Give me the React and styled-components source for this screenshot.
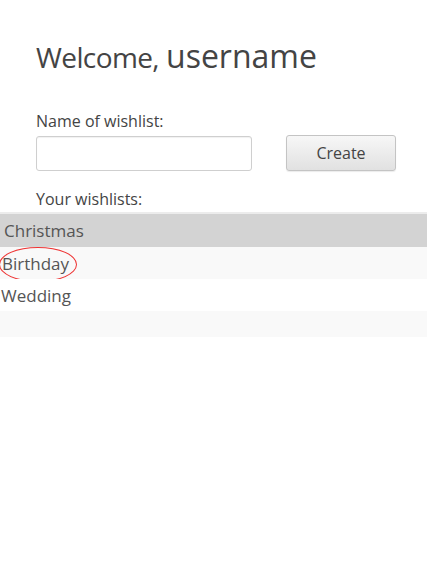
import styled, { createGlobalStyle } from 'styled-components';

const GlobalStyle = createGlobalStyle`
  html, body {
    margin: 0;
    padding: 0;
    background: #fff;
  }
  body {
    font-family: "Open Sans", "Noto Sans", sans-serif;
    color: #555;
  }
`;

const Page = styled.div`
  width: 427px;
  height: 575px;
  box-sizing: border-box;
  padding-top: 36px;
  overflow: hidden;
`;

const Content = styled.div`
  padding-left: 36px;
`;

const Title = styled.h1`
  margin: 0;
  font-weight: 400;
  color: #444;
  line-height: 40px;
  white-space: nowrap;
`;

const Greeting = styled.span`
  font-size: 28px;
  letter-spacing: -0.6px;
`;

const UserName = styled.span`
  font-size: 32px;
  margin-left: 7px;
`;

const Label = styled.div`
  font-size: 16px;
  line-height: 20px;
  color: #444;
  margin-top: ${(p) => p.$top || 0}px;
`;

const FormRow = styled.div`
  display: flex;
  align-items: center;
  margin-top: 4px;
`;

const NameInput = styled.input`
  width: 216px;
  height: 35px;
  box-sizing: border-box;
  border: 1px solid #cfcfcf;
  border-radius: 3px;
  box-shadow: inset 0 1px 1px rgba(0, 0, 0, 0.06);
  font-family: inherit;
  font-size: 15px;
  padding: 0 8px;
  outline: none;
`;

const CreateButton = styled.button`
  margin-left: 34px;
  width: 110px;
  height: 36px;
  box-sizing: border-box;
  border: 1px solid #c4c4c4;
  border-radius: 3px;
  background: linear-gradient(#f7f7f7, #e1e1e1);
  box-shadow: 0 1px 1px rgba(0, 0, 0, 0.08);
  font-family: inherit;
  font-size: 16px;
  color: #444;
`;

const List = styled.ul`
  list-style: none;
  margin: 3px 0 0;
  padding: 0;
  border-top: 2px solid #ececec;
`;

const Row = styled.li`
  position: relative;
  height: ${(p) => p.$height || 32}px;
  display: flex;
  align-items: center;
  padding-left: ${(p) => p.$indent || 1}px;
  font-size: 17px;
  color: #555;
  background: ${(p) => (p.$selected ? '#d3d3d3' : p.$odd ? '#f9f9f9' : '#fff')};
`;

const Marked = styled.span`
  position: relative;
  &::after {
    content: '';
    position: absolute;
    left: -3px;
    right: -8px;
    top: -5px;
    bottom: -7px;
    border: 1.3px solid #e33;
    border-radius: 50%;
  }
`;

export default function App() {
  return (
    <Page>
      <GlobalStyle />
      <Content>
        <Title>
          <Greeting>Welcome,</Greeting>
          <UserName>username</UserName>
        </Title>
        <Label $top={34}>Name of wishlist:</Label>
        <FormRow>
          <NameInput type="text" />
          <CreateButton>Create</CreateButton>
        </FormRow>
        <Label $top={18}>Your wishlists:</Label>
      </Content>
      <List>
        <Row $selected $indent={4} $height={33}>Christmas</Row>
        <Row $odd $indent={2}>
          <Marked>Birthday</Marked>
        </Row>
        <Row>Wedding</Row>
        <Row $odd $height={26} />
      </List>
    </Page>
  );
}
